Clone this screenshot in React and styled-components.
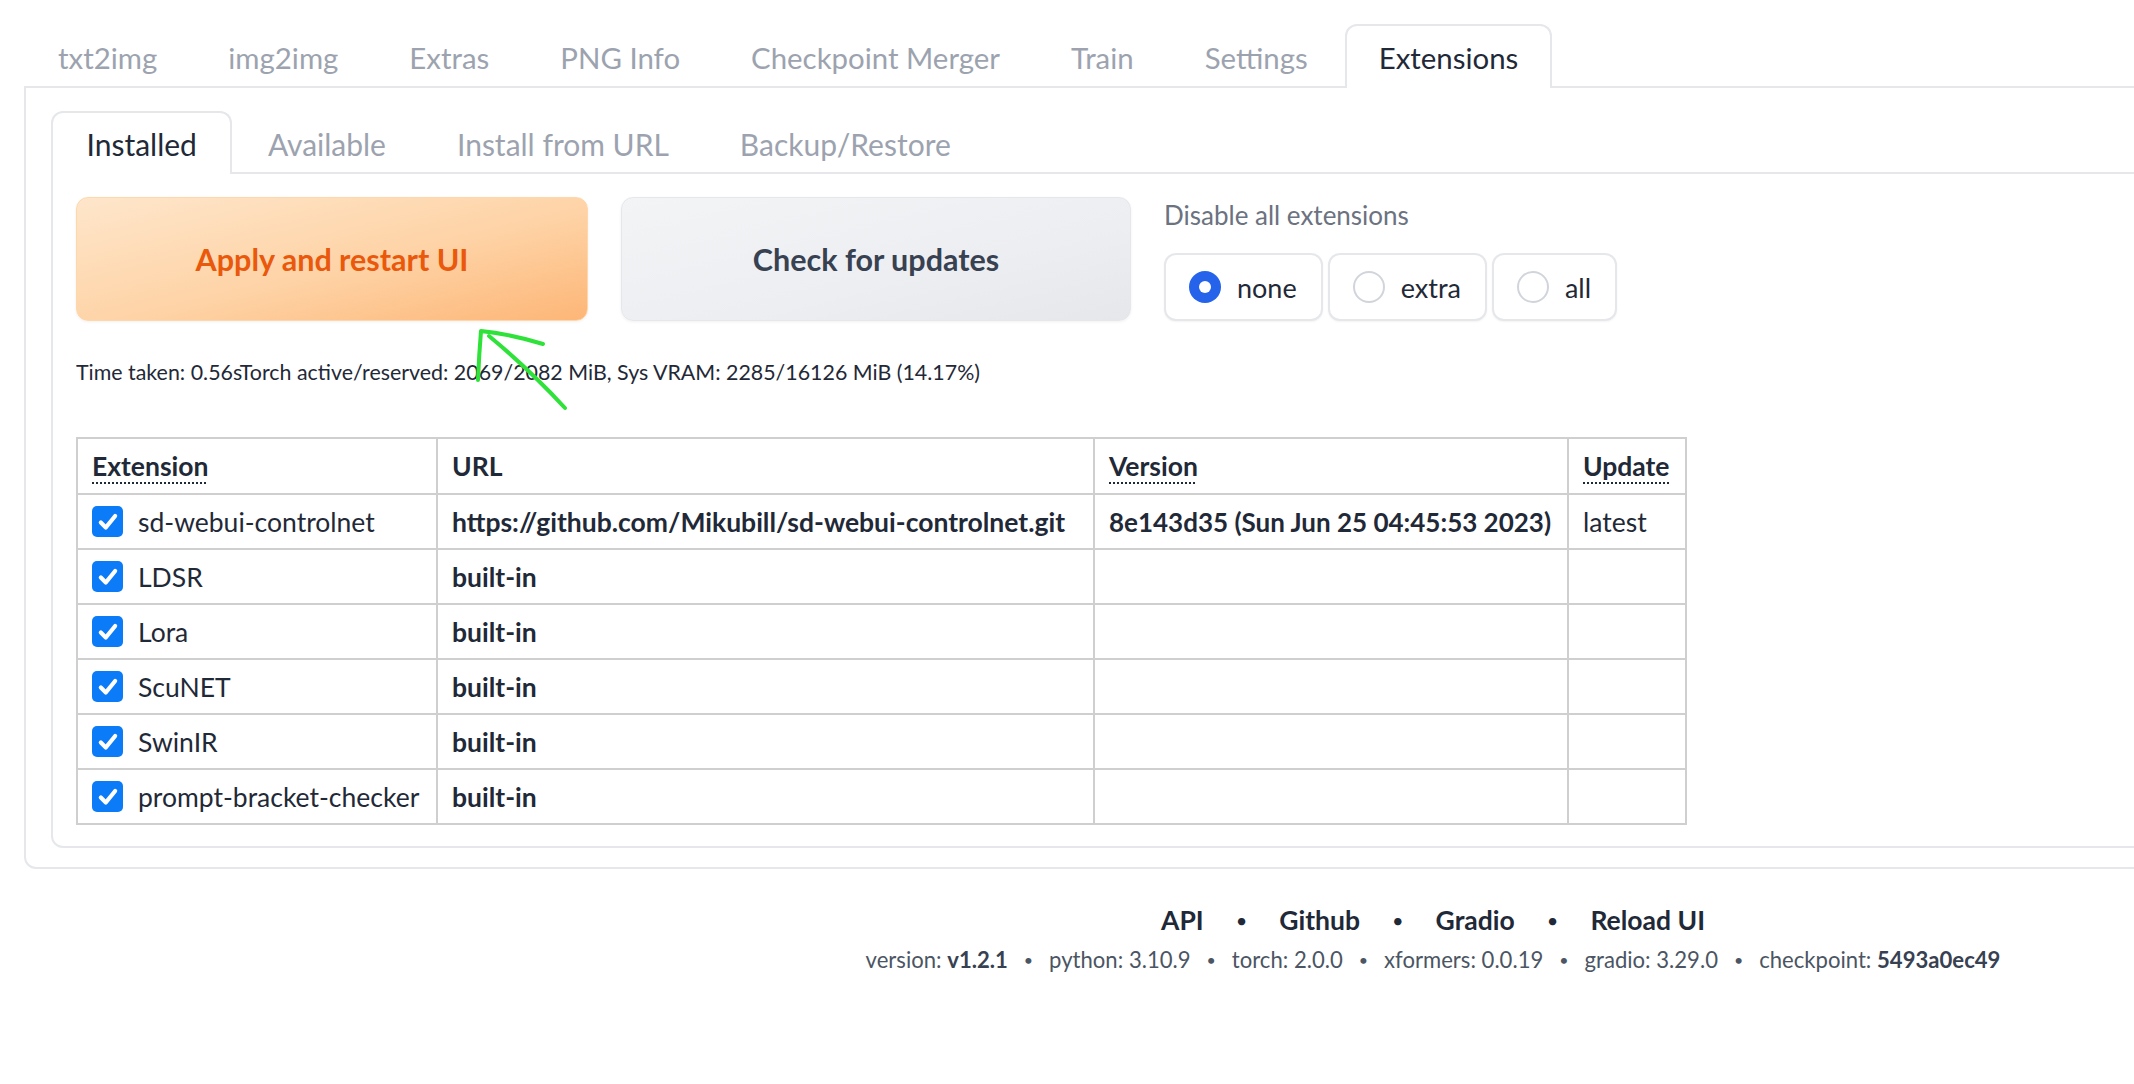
import React from "react";
import styled, { createGlobalStyle } from "styled-components";

const GlobalStyle = createGlobalStyle`
  html, body { margin: 0; padding: 0; background: #fff; overflow: hidden; }
  body { font-family: Lato, "Noto Sans", sans-serif; color: #1f2937; }
  * { box-sizing: border-box; }
`;

const Page = styled.div`
  position: relative;
  width: 2866px;
  padding: 24px 24px 40px;
`;

const TabBar = styled.div`
  display: flex;
  align-items: flex-end;
  gap: ${(p) => p.$gap}px;
  height: ${(p) => p.$height}px;
  border-bottom: 2px solid #e5e7eb;
`;

const Tab = styled.div`
  position: relative;
  display: flex;
  align-items: center;
  height: ${(p) => p.$height}px;
  margin-bottom: -2px;
  padding: 0 ${(p) => p.$pad}px;
  font-size: ${(p) => p.$size}px;
  white-space: nowrap;
  color: ${(p) => (p.$active ? "#1f2937" : "#9ca3af")};
  background: ${(p) => (p.$active ? "#fff" : "transparent")};
  border: 2px solid ${(p) => (p.$active ? "#e5e7eb" : "transparent")};
  border-bottom: none;
  border-radius: 12px 12px 0 0;
`;

const Panel = styled.div`
  border: 2px solid #e5e7eb;
  border-top: none;
  border-radius: 0 0 12px 12px;
  padding: ${(p) => p.$pad};
`;

const ControlsRow = styled.div`
  display: flex;
  gap: 33px;
  height: 124px;
`;

const ActionButton = styled.button`
  width: ${(p) => p.$w}px;
  height: 100%;
  border-radius: 12px;
  font-family: Lato, "Noto Sans", sans-serif;
  font-weight: 700;
  font-size: 30.5px;
  cursor: pointer;
  ${(p) =>
    p.$primary
      ? `
    color: #ea580c;
    border: 1px solid #fed7aa;
    background: linear-gradient(to bottom right, #fee6cb 0%, #fed3a6 55%, #fdb677 100%);
    box-shadow: 0 1px 3px rgba(0,0,0,0.06);
  `
      : `
    color: #374151;
    border: 1px solid #e5e7eb;
    background: linear-gradient(to bottom right, #f3f4f6 0%, #eceef1 60%, #e5e7eb 100%);
    box-shadow: 0 1px 3px rgba(0,0,0,0.06);
  `}
`;

const RadioGroup = styled.div`
  display: flex;
  flex-direction: column;
`;

const GroupLabel = styled.div`
  font-size: 26px;
  line-height: 36px;
  color: #6b7280;
  margin-bottom: 20px;
`;

const RadioRow = styled.div`
  display: flex;
  gap: 5px;
  height: 68px;
`;

const RadioOption = styled.label`
  display: flex;
  align-items: center;
  gap: 16px;
  padding: 0 24px 0 23px;
  border: 2px solid #e5e7eb;
  border-radius: 12px;
  background: #fff;
  box-shadow: 0 1px 2px rgba(0,0,0,0.05);
  font-size: 27px;
  color: #1f2937;
`;

const RadioDot = styled.span`
  width: 32px;
  height: 32px;
  border-radius: 50%;
  flex-shrink: 0;
  ${(p) =>
    p.$checked
      ? `background: #2563eb; border: none; position: relative;
         &::after { content: ""; position: absolute; left: 10px; top: 10px; width: 12px; height: 12px; border-radius: 50%; background: #fff; }`
      : `background: #fff; border: 2px solid #d1d5db;`}
`;

const InfoText = styled.div`
  margin-top: 37px;
  font-size: 21.4px;
  line-height: 28px;
  color: #1f2937;
`;

const Table = styled.table`
  margin-top: 51px;
  width: 1609px;
  border-collapse: collapse;
  table-layout: fixed;
  border: 2px solid #cfcfcf;
`;

const Th = styled.th`
  height: 56px;
  padding: 0 14px;
  border: 2px solid #cfcfcf;
  text-align: left;
  font-size: 26.5px;
  font-weight: 700;
  color: #1f2937;
  white-space: nowrap;
`;

const HeadLabel = styled.span`
  text-decoration: ${(p) => (p.$dotted ? "underline dotted" : "none")};
  text-decoration-thickness: 2px;
  text-underline-offset: 6px;
`;

const Td = styled.td`
  height: 55px;
  padding: 0 12px 0 14px;
  border: 2px solid #cfcfcf;
  font-size: ${(p) => p.$size || 26.5}px;
  font-weight: ${(p) => (p.$bold ? 700 : 400)};
  color: #1f2937;
  white-space: nowrap;
  overflow: hidden;
`;

const NameCell = styled.div`
  display: flex;
  align-items: center;
  gap: 15px;
`;

const CheckBox = styled.span`
  width: 31px;
  height: 31px;
  border-radius: 5px;
  background: #0b7bf8;
  display: inline-flex;
  align-items: center;
  justify-content: center;
  flex-shrink: 0;
`;

const Footer = styled.div`
  margin-top: 33px;
  display: flex;
  flex-direction: column;
  align-items: center;
`;

const FooterLinks = styled.div`
  display: flex;
  align-items: center;
  font-size: 26.5px;
  line-height: 36px;
  font-weight: 700;
  color: #1f2937;
`;

const Bullet = styled.span`
  margin: 0 ${(p) => p.$space}px;
  font-weight: 400;
  font-size: ${(p) => p.$size}px;
`;

const VersionLine = styled.div`
  margin-top: 8px;
  font-size: 22.1px;
  line-height: 28px;
  color: #4b5563;
  display: flex;
  align-items: center;
  white-space: pre;
`;

const Strong = styled.b`
  font-weight: 700;
  color: #374151;
`;

const Annotation = styled.svg`
  position: absolute;
  left: 0;
  top: 0;
  pointer-events: none;
`;

const topTabs = ["txt2img", "img2img", "Extras", "PNG Info", "Checkpoint Merger", "Train", "Settings", "Extensions"];
const innerTabs = ["Installed", "Available", "Install from URL", "Backup/Restore"];
const rows = [
  { name: "sd-webui-controlnet", url: "https://github.com/Mikubill/sd-webui-controlnet.git", version: "8e143d35 (Sun Jun 25 04:45:53 2023)", update: "latest" },
  { name: "LDSR", url: "built-in" },
  { name: "Lora", url: "built-in" },
  { name: "ScuNET", url: "built-in" },
  { name: "SwinIR", url: "built-in" },
  { name: "prompt-bracket-checker", url: "built-in" },
];
const versions = [
  ["version: ", "v1.2.1", true],
  ["python: 3.10.9", "", false],
  ["torch: 2.0.0", "", false],
  ["xformers: 0.0.19", "", false],
  ["gradio: 3.29.0", "", false],
  ["checkpoint: ", "5493a0ec49", true],
];

function Check() {
  return (
    <svg width="22" height="22" viewBox="0 0 20 20">
      <path d="M3.5 10.5 L8 15 L16.5 4.5" fill="none" stroke="#fff" strokeWidth="3.8" strokeLinecap="round" strokeLinejoin="round" />
    </svg>
  );
}

export default function App() {
  return (
    <>
      <GlobalStyle />
      <Page>
        <TabBar $gap={3} $height={64}>
          {topTabs.map((t) => (
            <Tab key={t} $active={t === "Extensions"} $height={64} $pad={32} $size={29.4}>
              {t}
            </Tab>
          ))}
        </TabBar>
        <Panel $pad="23px 23px 19px 25px">
          <TabBar $gap={0} $height={63}>
            {innerTabs.map((t) => (
              <Tab key={t} $active={t === "Installed"} $height={63} $pad={33.5} $size={30}>
                {t}
              </Tab>
            ))}
          </TabBar>
          <Panel $pad="23px 23px 21px 23px">
            <ControlsRow>
              <ActionButton $primary $w={512}>Apply and restart UI</ActionButton>
              <ActionButton $w={510}>Check for updates</ActionButton>
              <RadioGroup>
                <GroupLabel>Disable all extensions</GroupLabel>
                <RadioRow>
                  {["none", "extra", "all"].map((o) => (
                    <RadioOption key={o}>
                      <RadioDot $checked={o === "none"} />
                      {o}
                    </RadioOption>
                  ))}
                </RadioRow>
              </RadioGroup>
            </ControlsRow>
            <InfoText>
              Time taken: 0.56sTorch active/reserved: 2069/2082 MiB, Sys VRAM: 2285/16126 MiB (14.17%)
            </InfoText>
            <Table>
              <colgroup>
                <col style={{ width: 360 }} />
                <col style={{ width: 657 }} />
                <col style={{ width: 474 }} />
                <col style={{ width: 118 }} />
              </colgroup>
              <thead>
                <tr>
                  <Th><HeadLabel $dotted>Extension</HeadLabel></Th>
                  <Th><HeadLabel>URL</HeadLabel></Th>
                  <Th><HeadLabel $dotted>Version</HeadLabel></Th>
                  <Th><HeadLabel $dotted>Update</HeadLabel></Th>
                </tr>
              </thead>
              <tbody>
                {rows.map((r) => (
                  <tr key={r.name}>
                    <Td>
                      <NameCell>
                        <CheckBox><Check /></CheckBox>
                        {r.name}
                      </NameCell>
                    </Td>
                    <Td $bold>{r.url}</Td>
                    <Td $bold $size={26}>{r.version || ""}</Td>
                    <Td>{r.update || ""}</Td>
                  </tr>
                ))}
              </tbody>
            </Table>
          </Panel>
        </Panel>
        <Footer>
          <FooterLinks>
            <span>API</span>
            <Bullet $space={32} $size={20}>•</Bullet>
            <span>Github</span>
            <Bullet $space={32} $size={20}>•</Bullet>
            <span>Gradio</span>
            <Bullet $space={32} $size={20}>•</Bullet>
            <span>Reload UI</span>
          </FooterLinks>
          <VersionLine>
            {versions.map(([a, b, bold], i) => (
              <React.Fragment key={i}>
                {i > 0 && <Bullet $space={16} $size={16}>•</Bullet>}
                <span>{a}</span>
                {bold && <Strong>{b}</Strong>}
              </React.Fragment>
            ))}
          </VersionLine>
        </Footer>
        <Annotation width="700" height="450" viewBox="0 0 700 450">
          <g fill="none" stroke="#2fe23a" strokeWidth="4" strokeLinecap="round" strokeLinejoin="round">
            <path d="M565 408 Q530 370 489 336" />
            <path d="M478 380 Q479 355 481 331 Q510 334 543 344" />
          </g>
        </Annotation>
      </Page>
    </>
  );
}
